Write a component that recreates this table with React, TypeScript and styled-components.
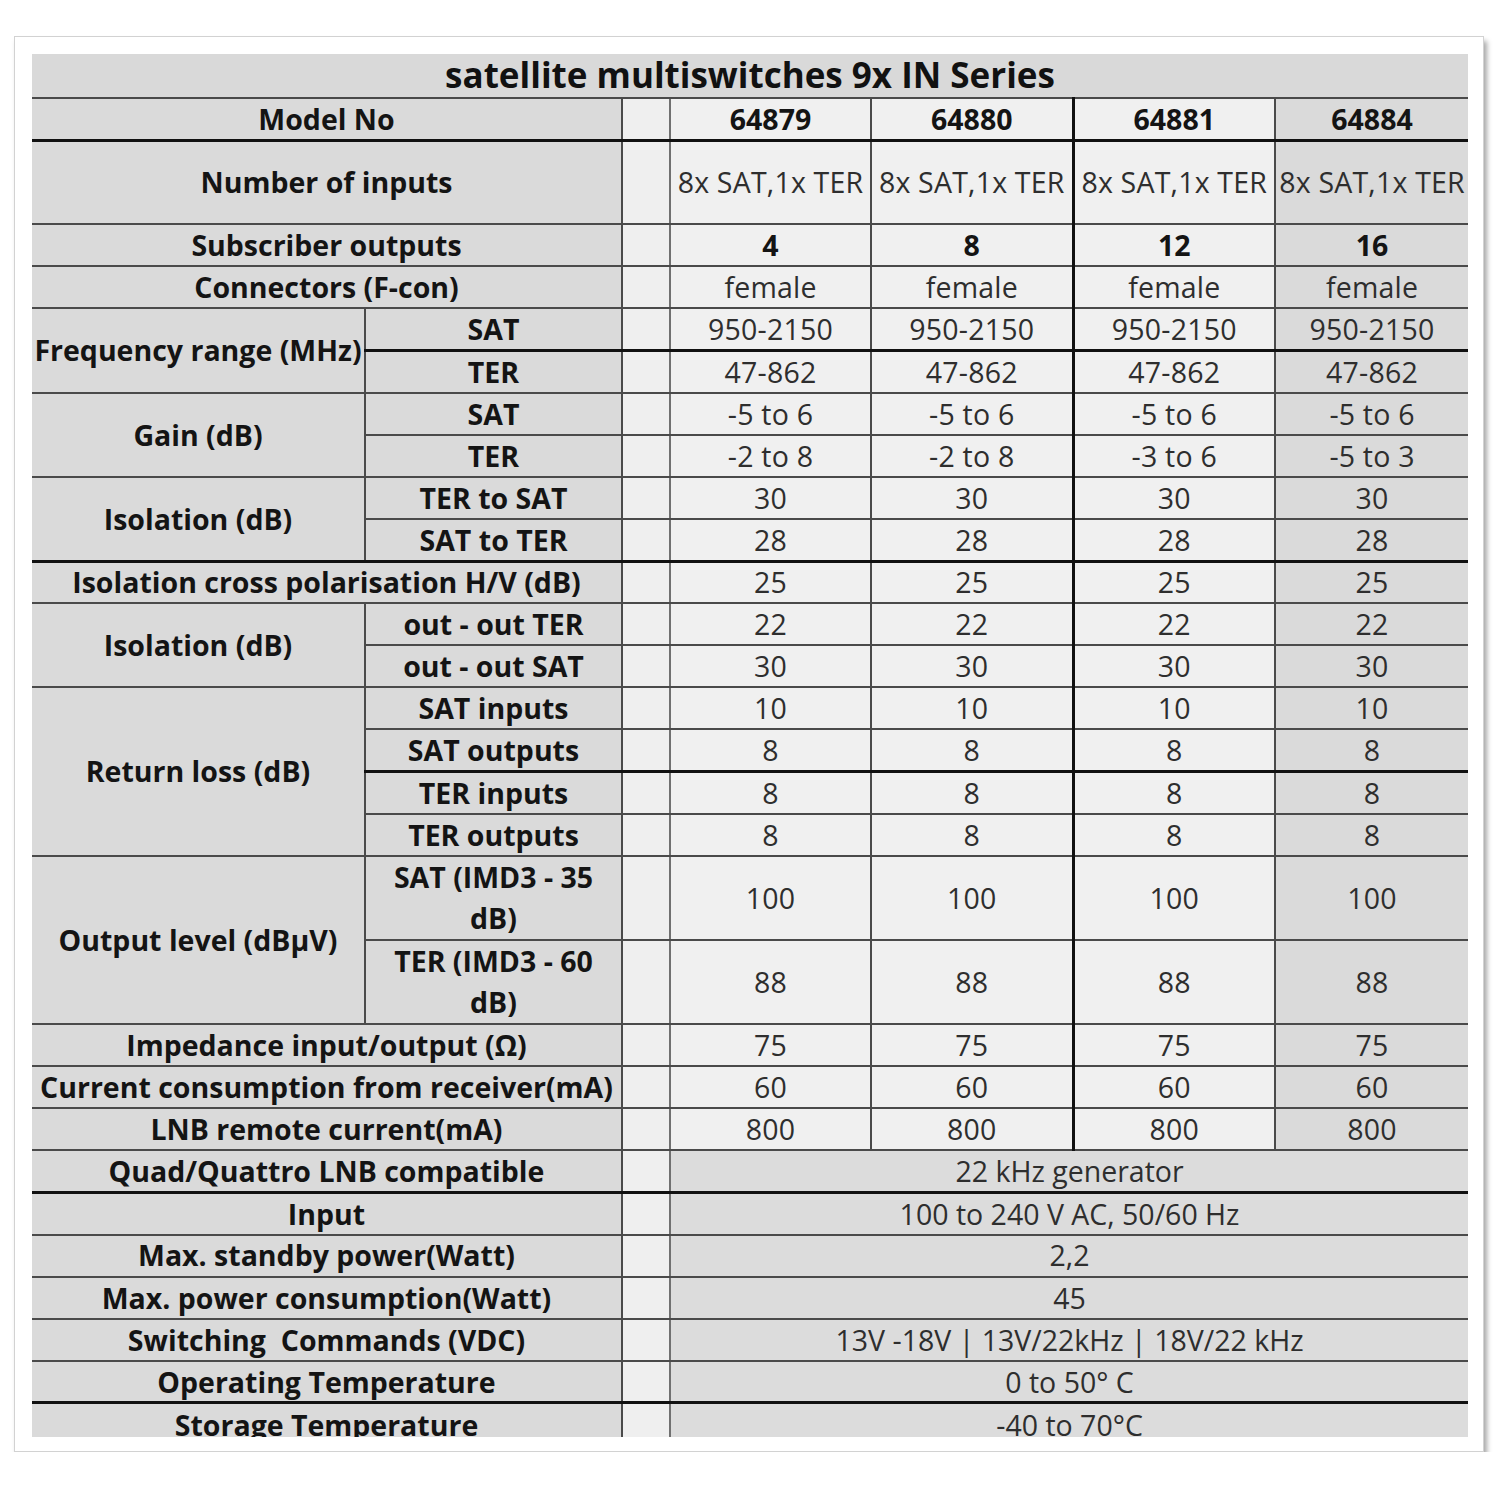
import * as React from 'react'
import styled, { createGlobalStyle, css } from 'styled-components'

const GlobalStyle = createGlobalStyle`
  body {
    margin: 0;
    background: #ffffff;
    font-family: 'Open Sans', 'Liberation Sans', sans-serif;
  }
`

const Page = styled.div`
  padding: 36px 0 0 14px;
`

const Card = styled.div`
  box-sizing: border-box;
  width: 1470px;
  height: 1416px;
  padding: 17px 15px 14px 17px;
  background: #ffffff;
  border: 1px solid #d2d2d2;
  box-shadow: 3px 5px 5px rgba(0, 0, 0, 0.35);
`

const Clip = styled.div`
  height: 1383px;
  overflow: hidden;
`

const Table = styled.table`
  width: 1436px;
  table-layout: fixed;
  border-collapse: collapse;
  border-style: hidden;
  color: #2b2b2b;
`

const TitleRow = styled.tr`
  height: 44px;
`

const TitleCell = styled.th`
  padding: 0 0 2px;
  background: #d9d9d9;
  border-bottom: 2px solid #4a4a4a;
  font-size: 35px;
  font-weight: 700;
  line-height: 40px;
  color: #111;
  text-align: center;
  vertical-align: middle;
`

const Row = styled.tr<{ $units: number }>`
  height: ${({ $units }) => $units * 42.1}px;
`

const edge = css<{ $strong?: boolean }>`
  padding: 0 2px;
  border: 2px solid #4a4a4a;
  text-align: center;
  vertical-align: middle;
  line-height: 1.2;
  ${({ $strong }) => $strong && 'border-top: 3px solid #111;'}
`

const LabelCell = styled.th<{ $strong?: boolean; $wrap?: boolean }>`
  ${edge};
  background: #dadada;
  font-size: 28.5px;
  font-weight: 700;
  color: #141414;
  white-space: nowrap;
  ${({ $wrap }) => $wrap && 'white-space: normal; line-height: 41px; padding: 0 20px;'}
`

const BlankCell = styled.td<{ $strong?: boolean }>`
  ${edge};
  background: #efefef;
  border-left-color: #333;
  border-right-color: #707070;
`

const ValueCell = styled.td<{ $strong?: boolean; $alt?: boolean; $bold?: boolean; $dark?: boolean }>`
  ${edge};
  background: ${({ $alt }) => ($alt ? '#dadada' : '#f0f0f0')};
  font-size: 28.5px;
  font-weight: ${({ $bold }) => ($bold ? 700 : 400)};
  color: ${({ $bold }) => ($bold ? '#141414' : '#2e2e2e')};
  white-space: nowrap;
  letter-spacing: ${({ $bold }) => ($bold ? '0' : '0.2px')};
  ${({ $dark }) => $dark && 'border-left: 3px solid #111;'}
`

const SpanCell = styled.td<{ $strong?: boolean }>`
  ${edge};
  background: #dcdcdc;
  font-size: 28.5px;
  color: #2e2e2e;
  white-space: pre;
`

type Spec = {
  label?: string
  group?: string
  groupSpan?: number
  sub?: string
  values?: string[]
  span?: string
  units?: number
  strong?: boolean
  bold?: boolean
}

const all = (v: string) => [v, v, v, v]
const models = ['64879', '64880', '64881', '64884']

const rows: Spec[] = [
  { label: 'Model No', values: models, bold: true },
  { label: 'Number of inputs', values: all('8x SAT,1x TER'), units: 2, strong: true },
  { label: 'Subscriber outputs', values: ['4', '8', '12', '16'], bold: true },
  { label: 'Connectors (F-con)', values: all('female') },
  { group: 'Frequency range (MHz)', groupSpan: 2, sub: 'SAT', values: all('950-2150') },
  { sub: 'TER', values: all('47-862'), strong: true },
  { group: 'Gain (dB)', groupSpan: 2, sub: 'SAT', values: all('-5 to 6') },
  { sub: 'TER', values: ['-2 to 8', '-2 to 8', '-3 to 6', '-5 to 3'] },
  { group: 'Isolation (dB)', groupSpan: 2, sub: 'TER to SAT', values: all('30') },
  { sub: 'SAT to TER', values: all('28') },
  { label: 'Isolation cross polarisation H/V (dB)', values: all('25'), strong: true },
  { group: 'Isolation (dB)', groupSpan: 2, sub: 'out - out TER', values: all('22') },
  { sub: 'out - out SAT', values: all('30') },
  { group: 'Return loss (dB)', groupSpan: 4, sub: 'SAT inputs', values: all('10') },
  { sub: 'SAT outputs', values: all('8') },
  { sub: 'TER inputs', values: all('8'), strong: true },
  { sub: 'TER outputs', values: all('8') },
  { group: 'Output level (dBµV)', groupSpan: 2, sub: 'SAT (IMD3 - 35 dB)', values: all('100'), units: 2 },
  { sub: 'TER (IMD3 - 60 dB)', values: all('88'), units: 2 },
  { label: 'Impedance input/output (Ω)', values: all('75') },
  { label: 'Current consumption from receiver(mA)', values: all('60') },
  { label: 'LNB remote current(mA)', values: all('800') },
  { label: 'Quad/Quattro LNB compatible', span: '22 kHz generator' },
  { label: 'Input', span: '100 to 240 V AC, 50/60 Hz', strong: true },
  { label: 'Max. standby power(Watt)', span: '2,2' },
  { label: 'Max. power consumption(Watt)', span: '45' },
  { label: 'Switching  Commands (VDC)', span: '13V -18V | 13V/22kHz | 18V/22 kHz' },
  { label: 'Operating Temperature', span: '0 to 50° C' },
  { label: 'Storage Temperature', span: '-40 to 70°C', strong: true },
]

const widths = [333, 257, 48, 201, 202, 202, 193]

export default function App() {
  return (
    <>
      <GlobalStyle />
      <Page>
        <Card>
          <Clip>
            <Table>
              <colgroup>
                {widths.map((w, i) => (
                  <col key={i} style={{ width: w }} />
                ))}
              </colgroup>
              <thead>
                <TitleRow>
                  <TitleCell colSpan={7}>satellite multiswitches 9x IN Series</TitleCell>
                </TitleRow>
              </thead>
              <tbody>
                {rows.map((r, i) => {
                  const units = r.units ?? 1
                  return (
                    <Row key={i} $units={units}>
                      {r.label && (
                        <LabelCell colSpan={2} $strong={r.strong}>
                          {r.label.replace('  ', '\u00a0 ')}
                        </LabelCell>
                      )}
                      {r.group && (
                        <LabelCell rowSpan={r.groupSpan} $strong={r.strong}>
                          {r.group}
                        </LabelCell>
                      )}
                      {r.sub && (
                        <LabelCell $strong={r.strong} $wrap={units > 1}>
                          {r.sub}
                        </LabelCell>
                      )}
                      <BlankCell $strong={r.strong} />
                      {r.values &&
                        r.values.map((v, j) => (
                          <ValueCell
                            key={j}
                            $strong={r.strong}
                            $bold={r.bold}
                            $alt={j === 3}
                            $dark={j === 2}
                          >
                            {v}
                          </ValueCell>
                        ))}
                      {r.span && (
                        <SpanCell colSpan={4} $strong={r.strong}>
                          {r.span}
                        </SpanCell>
                      )}
                    </Row>
                  )
                })}
              </tbody>
            </Table>
          </Clip>
        </Card>
      </Page>
    </>
  )
}
